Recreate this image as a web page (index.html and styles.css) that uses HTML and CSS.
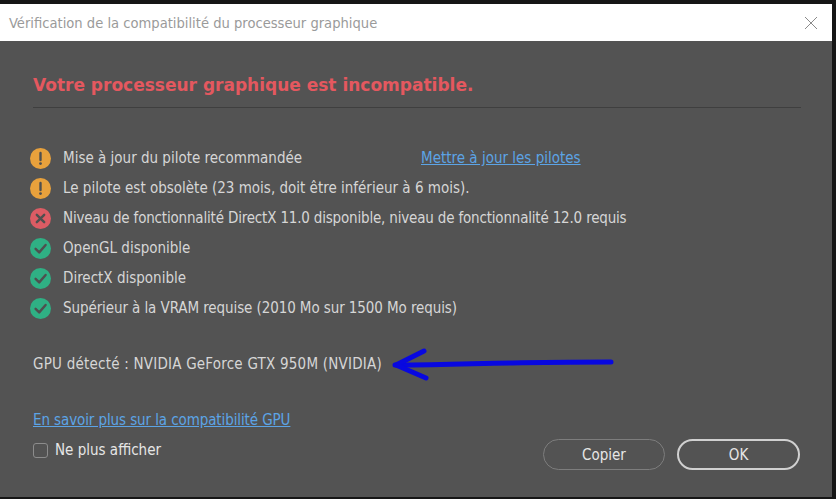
FILE: index.html
```html
<!DOCTYPE html>
<html>
<head>
  <title>Vérification du processeur graphique</title>
  <link rel="stylesheet" href="styles.css">
</head>
<body>
  <div class="dialog">
    <header class="titlebar">
      <span class="titlebar-text">Vérification de la compatibilité du processeur graphique</span>
      <svg class="close" width="14" height="14" viewBox="0 0 14 14"><path d="M1 1L13 13M13 1L1 13" stroke="#8a8a8a" stroke-width="1" fill="none"/></svg>
    </header>

    <main class="content">
      <h1 class="heading">Votre processeur graphique est incompatible.</h1>

      <ul class="checks">
        <li class="check">
          <svg class="icon" viewBox="0 0 21 21"><circle cx="10.5" cy="10.5" r="10.5" fill="#e8a13c"/><path d="M10.5 5V12" stroke="#4f4f4f" stroke-width="2.4" stroke-linecap="round"/><circle cx="10.5" cy="15.6" r="1.4" fill="#4f4f4f"/></svg>
          <span class="check-text check-text-first">Mise à jour du pilote recommandée</span>
          <a class="link" href="#">Mettre à jour les pilotes</a>
        </li>
        <li class="check">
          <svg class="icon" viewBox="0 0 21 21"><circle cx="10.5" cy="10.5" r="10.5" fill="#e8a13c"/><path d="M10.5 5V12" stroke="#4f4f4f" stroke-width="2.4" stroke-linecap="round"/><circle cx="10.5" cy="15.6" r="1.4" fill="#4f4f4f"/></svg>
          <span class="check-text">Le pilote est obsolète (23 mois, doit être inférieur à 6 mois).</span>
        </li>
        <li class="check">
          <svg class="icon" viewBox="0 0 21 21"><circle cx="10.5" cy="10.5" r="10.5" fill="#dc5c64"/><path d="M6.8 6.8L14.2 14.2M14.2 6.8L6.8 14.2" stroke="#4f4f4f" stroke-width="2.4" stroke-linecap="round"/></svg>
          <span class="check-text check-text-long">Niveau de fonctionnalité DirectX 11.0 disponible, niveau de fonctionnalité 12.0 requis</span>
        </li>
        <li class="check">
          <svg class="icon" viewBox="0 0 21 21"><circle cx="10.5" cy="10.5" r="10.5" fill="#2fb084"/><path d="M5.6 10.8L9.2 14.4L15.6 7" stroke="#4f4f4f" stroke-width="2.4" stroke-linecap="round" stroke-linejoin="round" fill="none"/></svg>
          <span class="check-text">OpenGL disponible</span>
        </li>
        <li class="check">
          <svg class="icon" viewBox="0 0 21 21"><circle cx="10.5" cy="10.5" r="10.5" fill="#2fb084"/><path d="M5.6 10.8L9.2 14.4L15.6 7" stroke="#4f4f4f" stroke-width="2.4" stroke-linecap="round" stroke-linejoin="round" fill="none"/></svg>
          <span class="check-text">DirectX disponible</span>
        </li>
        <li class="check">
          <svg class="icon" viewBox="0 0 21 21"><circle cx="10.5" cy="10.5" r="10.5" fill="#2fb084"/><path d="M5.6 10.8L9.2 14.4L15.6 7" stroke="#4f4f4f" stroke-width="2.4" stroke-linecap="round" stroke-linejoin="round" fill="none"/></svg>
          <span class="check-text check-text-vram">Supérieur à la VRAM requise (2010 Mo sur 1500 Mo requis)</span>
        </li>
      </ul>

      <p class="gpu">GPU détecté : NVIDIA GeForce GTX 950M (NVIDIA)</p>

      <div class="footer">
        <div class="footer-left">
          <a class="link link-more" href="#">En savoir plus sur la compatibilité GPU</a>
          <label class="dont-show"><span class="checkbox"></span>Ne plus afficher</label>
        </div>
        <div class="buttons">
          <button class="btn btn-secondary">Copier</button>
          <button class="btn btn-primary">OK</button>
        </div>
      </div>
    </main>
  </div>

  <svg class="arrow" width="226" height="40" viewBox="0 0 226 40">
    <path d="M3 17C60 17 90 15 120 15C160 14 190 14 219 14" stroke="#0808e0" stroke-width="5" stroke-linecap="round" fill="none"/>
    <path d="M32 3L4 17L34 30" stroke="#0808e0" stroke-width="5" stroke-linecap="round" stroke-linejoin="round" fill="none"/>
  </svg>
</body>
</html>
```

FILE: styles.css
```css
html, body {
  margin: 0;
  height: 100%;
}

body {
  background: #161616;
  font-family: "DejaVu Sans Condensed", "DejaVu Sans", sans-serif;
  font-size: 15px;
  color: #d6d6d6;
  overflow: hidden;
}

.dialog {
  width: 832px;
  height: 493px;
  padding-top: 4px;
  display: flex;
  flex-direction: column;
}

.titlebar {
  height: 37px;
  flex: none;
  background: #fff;
  display: flex;
  align-items: center;
  justify-content: space-between;
  padding: 0 14px 0 9px;
  color: #9a9a9a;
}

.titlebar-text {
  font-size: 14.6px;
}

.content {
  flex: 1;
  background: #535353;
  padding: 0 32px 0 33px;
  display: flex;
  flex-direction: column;
}

.heading {
  margin: 0 -1px 0 0;
  height: 66px;
  line-height: 88px;
  font-family: "DejaVu Sans", sans-serif;
  font-size: 17px;
  font-weight: bold;
  color: #e4585f;
  border-bottom: 1px solid #3f3f3f;
}

.checks {
  list-style: none;
  margin: 35px 0 0 -3px;
  padding: 0;
}

.check {
  height: 30px;
  display: flex;
  align-items: center;
}

.icon {
  width: 21px;
  height: 21px;
  flex: none;
  margin-right: 12px;
}

.check-text {
  margin-top: -1px;
}

.check-text-first {
  width: 358px;
}

.check-text-long {
  letter-spacing: -0.18px;
}

.check-text-vram {
  letter-spacing: -0.09px;
}

.link {
  color: #5ca4e6;
  text-decoration: underline;
}

.link-more {
  letter-spacing: -0.1px;
}

.gpu {
  margin: 31px 0 0;
  line-height: 20px;
  letter-spacing: 0.22px;
}

.footer {
  margin-top: 36px;
  display: flex;
  justify-content: space-between;
}

.footer-left {
  display: flex;
  flex-direction: column;
  gap: 10px;
  line-height: 20px;
}

.dont-show {
  display: flex;
  align-items: center;
  color: #e6e6e6;
}

.checkbox {
  width: 13px;
  height: 13px;
  margin-right: 7px;
  border: 1px solid #8c8c8c;
  border-radius: 3px;
}

.buttons {
  display: flex;
  gap: 12px;
  margin: 29px 0 0;
}

.btn {
  width: 122px;
  height: 31px;
  border-radius: 16px;
  background: transparent;
  font-family: inherit;
  font-size: 15px;
  color: #e6e6e6;
  padding: 1px 0 0;
}

.btn-secondary {
  border: 1px solid #7d7d7d;
}

.btn-primary {
  width: 123px;
  border: 2px solid #d0d0d0;
}

.arrow {
  position: absolute;
  left: 392px;
  top: 348px;
}
```
